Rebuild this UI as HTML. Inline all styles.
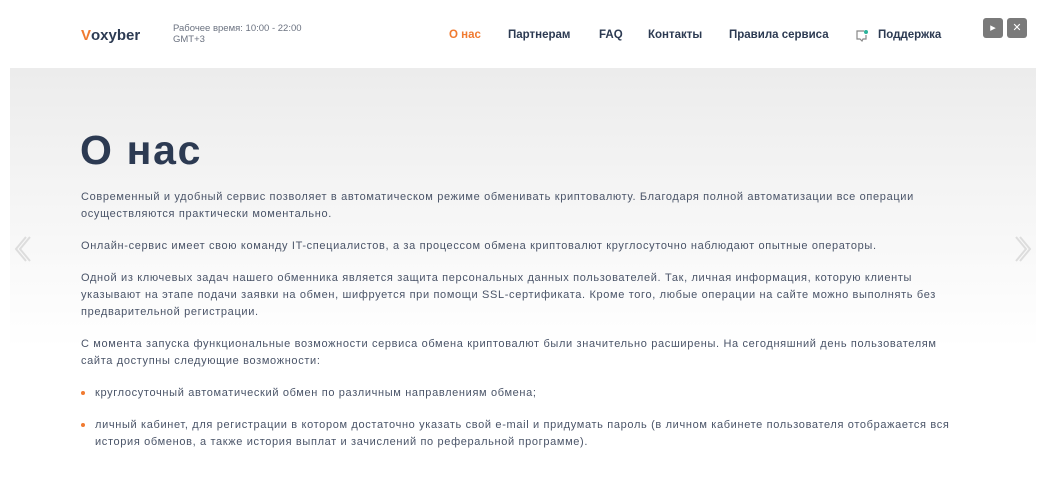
<!DOCTYPE html>
<html><head><meta charset="utf-8"><style>
*{margin:0;padding:0;box-sizing:border-box}
body{width:1049px;height:477px;background:#fff;font-family:"Liberation Sans",sans-serif;position:relative;overflow:hidden;color:#4a5468}
.logo{position:absolute;left:81px;top:27px;font-size:15px;font-weight:bold;color:#2c3a52}
.logo b{color:#f07a30}
.hours{position:absolute;left:173px;top:23px;font-size:9.5px;line-height:11px;color:#6b7280}
.nav{position:absolute;top:29px;font-size:11.5px;font-weight:bold;color:#2c3a52}
.btn{position:absolute;top:18px;width:20px;height:20px;background:#7a7a7a;border-radius:3px;color:#fff;font-size:11px;text-align:center;line-height:20px}
.panel{position:absolute;left:10px;top:68px;width:1026px;height:280px;background:linear-gradient(#ececec,#fff)}
h1{position:absolute;left:80px;top:127px;font-size:41px;font-weight:bold;color:#2c3a52;letter-spacing:1.7px}
.txt{position:absolute;left:81px;top:189px;width:880px;font-size:11px;line-height:17px;color:#4a5468;letter-spacing:0.65px}
.txt p{margin-bottom:15px}
.txt li{list-style:none;position:relative;padding-left:14px;margin-bottom:15px}
.txt li:before{content:"";position:absolute;left:0;top:6px;width:4px;height:4px;border-radius:50%;background:#f07a30}
</style></head><body>
<div class="logo"><b>V</b>oxyber</div>
<div class="hours">Рабочее время: 10:00 - 22:00<br>GMT+3</div>
<div class="nav" style="left:449px;color:#f07a30">О нас</div>
<div class="nav" style="left:508px">Партнерам</div>
<div class="nav" style="left:599px">FAQ</div>
<div class="nav" style="left:648px">Контакты</div>
<div class="nav" style="left:729px">Правила сервиса</div>
<svg style="position:absolute;left:855px;top:29px" width="14" height="14" viewBox="0 0 14 14"><path d="M9 2H2v8h3l2 2 1-2h3V6" fill="none" stroke="#888" stroke-width="1.2"/><circle cx="11" cy="3" r="2" fill="#2bb39a"/></svg>
<div class="nav" style="left:878px">Поддержка</div>
<div class="btn" style="left:983px">▸</div>
<div class="btn" style="left:1007px">✕</div>
<div class="panel"></div>
<svg style="left:14px;top:235px;position:absolute" width="20" height="28" viewBox="0 0 20 28"><path d="M16 2 6 14l10 12M12 2 2 14l10 12" fill="none" stroke="#ddd" stroke-width="2"/></svg>
<svg style="left:1012px;top:235px;position:absolute" width="20" height="28" viewBox="0 0 20 28"><path d="M4 2l10 12L4 26M8 2l10 12L8 26" fill="none" stroke="#ddd" stroke-width="2"/></svg>
<h1>О нас</h1>
<div class="txt">
<p>Современный и удобный сервис позволяет в автоматическом режиме обменивать криптовалюту. Благодаря полной автоматизации все операции осуществляются практически моментально.</p>
<p>Онлайн-сервис имеет свою команду IT-специалистов, а за процессом обмена криптовалют круглосуточно наблюдают опытные операторы.</p>
<p>Одной из ключевых задач нашего обменника является защита персональных данных пользователей. Так, личная информация, которую клиенты указывают на этапе подачи заявки на обмен, шифруется при помощи SSL-сертификата. Кроме того, любые операции на сайте можно выполнять без предварительной регистрации.</p>
<p>С момента запуска функциональные возможности сервиса обмена криптовалют были значительно расширены. На сегодняшний день пользователям сайта доступны следующие возможности:</p>
<ul><li>круглосуточный автоматический обмен по различным направлениям обмена;</li>
<li>личный кабинет, для регистрации в котором достаточно указать свой e-mail и придумать пароль (в личном кабинете пользователя отображается вся история обменов, а также история выплат и зачислений по реферальной программе).</li></ul>
</div>
</body></html>
